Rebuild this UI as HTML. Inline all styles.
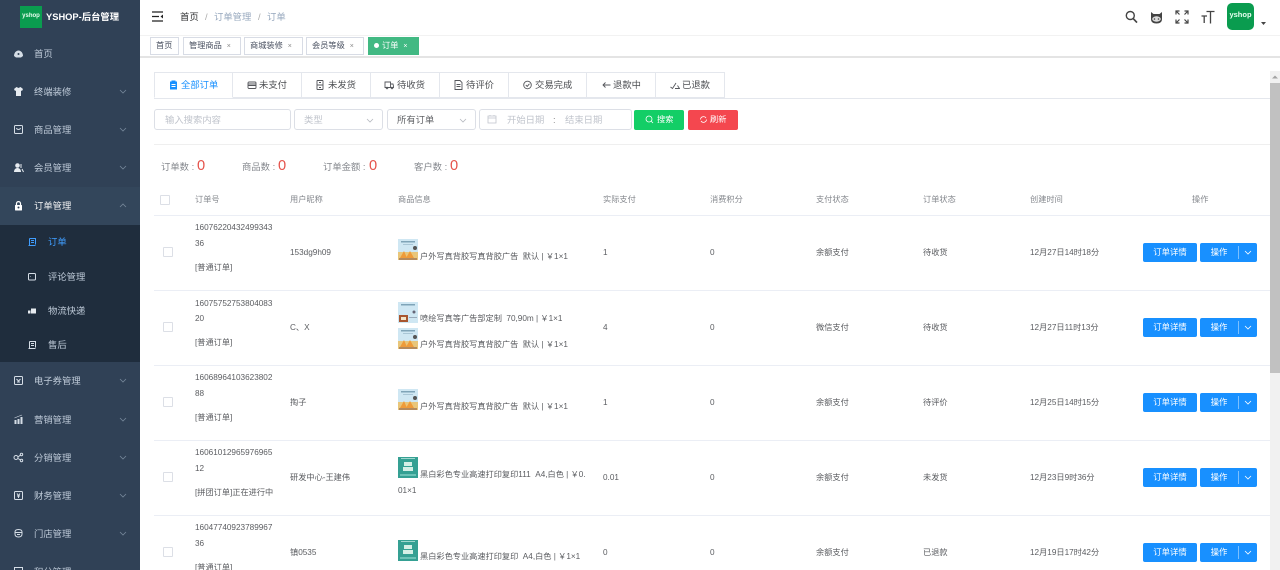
<!DOCTYPE html>
<html lang="zh"><head><meta charset="utf-8"><title>YSHOP</title>
<style>
html,body{margin:0;padding:0;width:1280px;height:570px;overflow:hidden;background:#fff}
body{position:relative;font-family:"Liberation Sans","Noto Sans CJK SC",sans-serif;color:#5b5d61}
#w{position:absolute;left:0;top:0;width:1280px;height:570px;overflow:hidden;filter:blur(.3px)}
.t{position:absolute;white-space:pre;line-height:14px;font-size:8.2px;height:14px}
.k{line-height:12px;height:12px}
.b{position:absolute;box-sizing:border-box}
.side{position:absolute;left:0;top:0;width:140px;height:570px;background:#304156;overflow:hidden}
.m{font-size:9.33px;color:#bfcbd9;left:34px}
.s{font-size:9.33px;color:#bfcbd9;left:48px}
.ic{position:absolute;fill:none;stroke:#d5dde6;stroke-width:1}
.ar{position:absolute;left:119px;width:8px;height:5px;fill:none;stroke:#76879a;stroke-width:.8}
.tab{position:absolute;top:72px;height:26px;box-sizing:border-box;border:1px solid #e4e7ed;border-left:0;background:#fff}
.tt{font-size:9.33px;top:78px;color:#4d4f53}
.ti{position:absolute;top:80px;fill:none;stroke:#55575c;stroke-width:.9}
.tag{position:absolute;top:37px;height:18px;box-sizing:border-box;border:1px solid #d8dce5;font-size:8.2px;line-height:16px;color:#495060;white-space:pre;padding-left:5px;background:#fff}
.tag i{font-style:normal;color:#888;font-size:7px;margin-left:5px}
.in{position:absolute;top:109px;height:21px;box-sizing:border-box;border:1px solid #dcdfe6;border-radius:3px;background:#fff}
.h{color:#85888e;top:193px}
.cb{position:absolute;width:10px;height:10px;box-sizing:border-box;border:1px solid #dcdfe6;border-radius:1px;background:#fff}
.ln{position:absolute;left:154px;width:1116px;height:1px;background:#ebeef5}
.bt{position:absolute;height:19px;background:#1890ff;border-radius:2px;color:#fff;font-size:8.4px;line-height:19px;text-align:center;white-space:pre}
.st{font-size:9.33px;color:#85888e;top:161px;line-height:12px;height:12px}
.n{font-size:14.67px;color:#e5534b;top:160px;line-height:13px;height:13px}
.th{position:absolute;width:20px;height:21px;overflow:hidden}
</style></head><body><div id="w">

<svg width="0" height="0" style="position:absolute"><defs>
<symbol id="pa" viewBox="0 0 20 21"><rect width="20" height="21" fill="#cfe7f3"/><rect x="3" y="2" width="14" height="1.5" fill="#7fa4b8"/><rect x="5" y="5" width="10" height="1" fill="#a9c6d6"/><circle cx="17" cy="9" r="2" fill="#555"/><rect y="13" width="20" height="8" fill="#e9c67a"/><path d="M2 19L6 12L9 19M8 19L12 12L16 19" fill="#ee9b3a"/><rect x="1" y="19" width="18" height="2" fill="#b58a5c"/></symbol>
<symbol id="pb" viewBox="0 0 20 21"><rect width="20" height="21" fill="#cfe7f3"/><rect x="3" y="2" width="14" height="1.5" fill="#7fa4b8"/><circle cx="16" cy="10" r="1.5" fill="#667"/><rect x="1" y="13" width="9" height="7" fill="#a8562f"/><rect x="3" y="15" width="5" height="3" fill="#f2e4c8"/><rect x="11" y="15" width="8" height="1" fill="#9ab"/></symbol>
<symbol id="pc" viewBox="0 0 20 21"><rect width="20" height="21" fill="#35a093"/><rect x="3" y="1" width="14" height="1" fill="#9fd8cf"/><rect x="6" y="5" width="8" height="4" fill="#d5efe6"/><rect x="5" y="10" width="10" height="4" fill="#d5efe6"/><rect x="2" y="17" width="16" height="2" fill="#6cc2b6"/></symbol>
<symbol id="ch" viewBox="0 0 8 5"><path d="M1 1L4 4L7 1"/></symbol>
<symbol id="cu" viewBox="0 0 8 5"><path d="M1 4L4 1L7 4"/></symbol>
</defs></svg>

<!-- SIDEBAR -->
<div class="side">
  <div class="b" style="left:20px;top:6px;width:22px;height:22px;background:#0a9c4f"></div>
  <div class="t k" style="left:20px;top:10px;width:22px;text-align:center;font-size:6px;color:#e8fff0;font-weight:bold">yshop</div>
  <div class="t k" style="left:46px;top:11px;font-size:9.33px;font-weight:bold;color:#fff">YSHOP-后台管理</div>

  <div class="b" style="left:0;top:187px;width:140px;height:38px;background:#33465b"></div>
  <div class="b" style="left:0;top:225px;width:140px;height:137px;background:#1f2d3d"></div>

  <svg class="ic" style="left:13px;top:48px" width="11" height="11" viewBox="0 0 11 11"><path d="M1 8C1 5 3 2.5 5.5 2.5S10 5 10 8L8 9.5H3Z" fill="#d5dde6" stroke="none"/><circle cx="5.5" cy="6" r="1" fill="#304156" stroke="none"/></svg>
  <div class="t m" style="top:47px">首页</div>

  <svg class="ic" style="left:13px;top:86px" width="11" height="11" viewBox="0 0 11 11"><path d="M3.5 1L1 3L2 5L3 4.5V10H8V4.5L9 5L10 3L7.5 1L5.5 2Z" fill="#e6ebf0" stroke="none"/></svg>
  <div class="t m" style="top:85px">终端装修</div>
  <svg class="ar" style="top:89px"><use href="#ch"/></svg>

  <svg class="ic" style="left:13px;top:124px" width="11" height="11" viewBox="0 0 11 11"><rect x="1.5" y="1.5" width="8" height="8" rx="1"/><path d="M3.5 4C4 6 7 6 7.5 4"/></svg>
  <div class="t m" style="top:123px">商品管理</div>
  <svg class="ar" style="top:127px"><use href="#ch"/></svg>

  <svg class="ic" style="left:13px;top:162px" width="11" height="11" viewBox="0 0 11 11"><circle cx="4.5" cy="3.5" r="2.3" fill="#e6ebf0" stroke="none"/><path d="M1 10C1 7 3 6 4.5 6S8 7 8 10Z" fill="#e6ebf0" stroke="none"/><path d="M8 2V6M9 7L10.5 10" stroke="#e6ebf0"/></svg>
  <div class="t m" style="top:161px">会员管理</div>
  <svg class="ar" style="top:165px"><use href="#ch"/></svg>

  <svg class="ic" style="left:13px;top:200px" width="11" height="11" viewBox="0 0 11 11"><path d="M3.5 5V3.5C3.5 1 7.5 1 7.5 3.5V5" stroke="#fff" stroke-width="1.2"/><rect x="2" y="5" width="7" height="5.5" rx=".5" fill="#fff" stroke="none"/><circle cx="5.5" cy="7.5" r="1" fill="#304156" stroke="none"/></svg>
  <div class="t m" style="top:199px;color:#f4f4f5">订单管理</div>
  <svg class="ar" style="top:203px"><use href="#cu"/></svg>

  <svg class="ic" style="left:27px;top:237px;stroke:#409eff" width="10" height="10" viewBox="0 0 10 10"><path d="M2.5 1.5H8.5V7.5M1.5 8.5H8.5M2.5 1.5V8M4 3.5H7M4 5.5H7"/></svg>
  <div class="t s" style="top:235px;color:#409eff">订单</div>
  <svg class="ic" style="left:27px;top:272px" width="10" height="10" viewBox="0 0 10 10"><rect x="1.5" y="1.5" width="7" height="6.5" rx="1"/><path d="M3 4.5H3.5"/></svg>
  <div class="t s" style="top:270px">评论管理</div>
  <svg class="ic" style="left:27px;top:306px" width="10" height="10" viewBox="0 0 10 10"><rect x="4" y="2.5" width="5" height="5" fill="#e6ebf0" stroke="none"/><rect x="1" y="4.5" width="2.5" height="3" fill="#e6ebf0" stroke="none"/></svg>
  <div class="t s" style="top:304px">物流快递</div>
  <svg class="ic" style="left:27px;top:340px" width="10" height="10" viewBox="0 0 10 10"><path d="M2.5 1.5H8.5V7.5M1.5 8.5H8.5M2.5 1.5V8M4 3.5H7M4 5.5H7"/></svg>
  <div class="t s" style="top:338px">售后</div>

  <svg class="ic" style="left:13px;top:375px" width="11" height="11" viewBox="0 0 11 11"><rect x="1.5" y="1.5" width="8" height="8" rx="1"/><path d="M3.5 4L5.5 6L7.5 4M4 7H7"/></svg>
  <div class="t m" style="top:374px">电子券管理</div>
  <svg class="ar" style="top:378px"><use href="#ch"/></svg>

  <svg class="ic" style="left:13px;top:414px" width="11" height="11" viewBox="0 0 11 11"><path d="M1.5 10V6H3.5V10ZM4.5 10V5H6.5V10ZM7.5 10V3H9.5V10Z" fill="#d5dde6" stroke="none"/><path d="M1.5 4L5 2.5L9 1" stroke-width=".6"/></svg>
  <div class="t m" style="top:413px">营销管理</div>
  <svg class="ar" style="top:417px"><use href="#ch"/></svg>

  <svg class="ic" style="left:13px;top:452px" width="11" height="11" viewBox="0 0 11 11"><circle cx="3" cy="5.5" r="2"/><circle cx="8.5" cy="2.5" r="1.2"/><circle cx="8.5" cy="8.5" r="1.2"/><path d="M5 5L7.5 3M5 6.5L7.5 8"/></svg>
  <div class="t m" style="top:451px">分销管理</div>
  <svg class="ar" style="top:455px"><use href="#ch"/></svg>

  <svg class="ic" style="left:13px;top:490px" width="11" height="11" viewBox="0 0 11 11"><rect x="1.5" y="1.5" width="8" height="8" rx="1"/><path d="M4 3.5L5.5 5.5L7 3.5M5.5 5.5V8M4 6H7"/></svg>
  <div class="t m" style="top:489px">财务管理</div>
  <svg class="ar" style="top:493px"><use href="#ch"/></svg>

  <svg class="ic" style="left:13px;top:528px" width="11" height="11" viewBox="0 0 11 11"><path d="M2 4C2 2 3.5 1.5 5.5 1.5S9 2 9 4V6C9 8 7.5 9 5.5 9S2 8 2 6ZM2 4.5H9M4 6.5H7"/></svg>
  <div class="t m" style="top:527px">门店管理</div>
  <svg class="ar" style="top:531px"><use href="#ch"/></svg>

  <svg class="ic" style="left:13px;top:566px" width="11" height="11" viewBox="0 0 11 11"><rect x="1.5" y="1.5" width="8" height="8"/></svg>
  <div class="t m" style="top:565px">积分管理</div>
</div>

<!-- TOP BAR -->
<svg style="position:absolute;left:152px;top:11px" width="12" height="11" viewBox="0 0 12 11"><path d="M0 1H11M0 5.5H7M0 10H11" stroke="#222" stroke-width="1.3" fill="none"/><path d="M11 3.5L8.5 5.5L11 7.5Z" fill="#222"/></svg>
<div class="t k" style="left:180px;top:11px;font-size:9.33px;color:#303133">首页</div>
<div class="t k" style="left:205px;top:11px;font-size:9.33px;color:#aaa">/</div>
<div class="t k" style="left:214px;top:11px;font-size:9.33px;color:#97a8be">订单管理</div>
<div class="t k" style="left:258px;top:11px;font-size:9.33px;color:#aaa">/</div>
<div class="t k" style="left:267px;top:11px;font-size:9.33px;color:#97a8be">订单</div>

<svg style="position:absolute;left:1125px;top:10px" width="13" height="14" viewBox="0 0 13 14"><circle cx="5.3" cy="5.5" r="4" fill="none" stroke="#444" stroke-width="1.4"/><path d="M8.2 8.6L12 12.6" stroke="#444" stroke-width="1.7"/></svg>
<svg style="position:absolute;left:1150px;top:11px" width="13" height="13" viewBox="0 0 13 13"><path d="M1 1L3.5 3H9.5L12 1V8C12 11 10 12.5 6.5 12.5S1 11 1 8Z" fill="#444"/><ellipse cx="6.5" cy="8" rx="4.3" ry="2.7" fill="#ddd"/><circle cx="4.5" cy="8" r=".8" fill="#444"/><circle cx="8.5" cy="8" r=".8" fill="#444"/></svg>
<svg style="position:absolute;left:1175px;top:10px" width="14" height="14" viewBox="0 0 14 14"><g fill="none" stroke="#444" stroke-width="1.2"><path d="M1 4.5V1H4.5M1 1L4.5 4.5M13 4.5V1H9.5M13 1L9.5 4.5M1 9.5V13H4.5M1 13L4.5 9.5M13 9.5V13H9.5M13 13L9.5 9.5"/></g></svg>
<svg style="position:absolute;left:1201px;top:10px" width="14" height="14" viewBox="0 0 14 14"><path d="M5.5 1.5H13.5M9.5 1.5V13.5M0.5 6H6M3.2 6V13" fill="none" stroke="#444" stroke-width="1.3"/></svg>
<div class="b" style="left:1227px;top:3px;width:27px;height:27px;background:#0a9c4f;border-radius:5px"></div>
<div class="t k" style="left:1227px;top:9px;width:27px;text-align:center;font-size:7.5px;color:#e8fff0;font-weight:bold">yshop</div>
<svg style="position:absolute;left:1261px;top:22px" width="6" height="4" viewBox="0 0 6 4"><path d="M0 0H5L2.5 3Z" fill="#444"/></svg>

<!-- TAG BAR -->
<div class="b" style="left:140px;top:35px;width:1140px;height:1px;background:#f2f2f2"></div>
<div class="b" style="left:140px;top:56px;width:1140px;height:2px;background:#e4e4e4"></div>
<div class="tag" style="left:150px;width:29px">首页</div>
<div class="tag" style="left:183px;width:58px">管理商品<i>×</i></div>
<div class="tag" style="left:244px;width:59px">商城装修<i>×</i></div>
<div class="tag" style="left:306px;width:58px">会员等级<i>×</i></div>
<div class="tag" style="left:368px;width:51px;background:#42b983;border-color:#42b983;color:#fff"><span style="display:inline-block;width:5px;height:5px;border-radius:50%;background:#fff;margin-right:3px;vertical-align:0"></span>订单<i style="color:#fff">×</i></div>

<!-- TABS -->
<div class="b" style="left:154px;top:98px;width:1116px;height:1px;background:#e4e7ed"></div>
<div class="tab" style="left:154px;width:79px;border-left:1px solid #e4e7ed;border-bottom-color:#fff"></div>
<div class="tab" style="left:233px;width:69px"></div>
<div class="tab" style="left:302px;width:69px"></div>
<div class="tab" style="left:371px;width:69px"></div>
<div class="tab" style="left:440px;width:69px"></div>
<div class="tab" style="left:509px;width:78px"></div>
<div class="tab" style="left:587px;width:69px"></div>
<div class="tab" style="left:656px;width:69px"></div>

<svg class="ti" style="left:169px;stroke:none" width="9" height="10" viewBox="0 0 9 10"><path d="M2.5 0.5H6.5V1.5H8V9.5H1V1.5H2.5Z" fill="#1890ff"/><rect x="2.5" y="4" width="4" height="1" fill="#fff"/><rect x="2.5" y="6" width="4" height="1" fill="#fff"/></svg>
<div class="t tt" style="left:181px;color:#1890ff">全部订单</div>
<svg class="ti" style="left:247px" width="10" height="10" viewBox="0 0 10 10"><rect x="1" y="2" width="8" height="6.5" rx="1"/><path d="M1 4H9M1 5.5H9"/></svg>
<div class="t tt" style="left:259px">未支付</div>
<svg class="ti" style="left:316px" width="8" height="10" viewBox="0 0 8 10"><rect x="1" y=".5" width="6" height="9" rx=".5"/><path d="M1 5H7M3 2.5H5M3 7.5H5"/></svg>
<div class="t tt" style="left:328px">未发货</div>
<svg class="ti" style="left:384px" width="10" height="10" viewBox="0 0 10 10"><path d="M1 2H6.5V7.5H1ZM6.5 4H9L9.5 6V7.5H6.5"/><circle cx="3" cy="8" r=".8"/><circle cx="8" cy="8" r=".8"/></svg>
<div class="t tt" style="left:397px">待收货</div>
<svg class="ti" style="left:454px" width="9" height="10" viewBox="0 0 9 10"><path d="M1 .5H6L8 2.5V9.5H1ZM2.5 4.5H6.5M2.5 6.5H6.5"/></svg>
<div class="t tt" style="left:466px">待评价</div>
<svg class="ti" style="left:523px" width="9" height="10" viewBox="0 0 9 10"><circle cx="4.5" cy="5" r="3.8"/><path d="M2.8 5L4.2 6.4L6.4 3.8"/></svg>
<div class="t tt" style="left:535px">交易完成</div>
<svg class="ti" style="left:602px" width="9" height="10" viewBox="0 0 9 10"><path d="M8.5 5H1M3.5 2.5L1 5L3.5 7.5"/></svg>
<div class="t tt" style="left:613px">退款中</div>
<svg class="ti" style="left:670px" width="10" height="10" viewBox="0 0 10 10"><path d="M.5 7L2.5 8.5L6 3M5 8.5H9.5L7.5 5.5"/></svg>
<div class="t tt" style="left:682px">已退款</div>

<!-- FILTERS -->
<div class="in" style="left:154px;width:137px"></div>
<div class="t k" style="left:165px;top:114px;font-size:9.33px;color:#c0c4cc">输入搜索内容</div>
<div class="in" style="left:294px;width:89px"></div>
<div class="t k" style="left:304px;top:114px;font-size:9.33px;color:#c0c4cc">类型</div>
<svg class="ar" style="left:366px;top:118px;stroke:#b5b8bf"><use href="#ch"/></svg>
<div class="in" style="left:387px;width:89px"></div>
<div class="t k" style="left:397px;top:114px;font-size:9.33px;color:#606266">所有订单</div>
<svg class="ar" style="left:459px;top:118px;stroke:#b5b8bf"><use href="#ch"/></svg>
<div class="in" style="left:479px;width:153px"></div>
<svg style="position:absolute;left:487px;top:114px" width="10" height="10" viewBox="0 0 10 10"><path d="M1 2H9V9H1ZM1 4H9M3 1V2M7 1V2" fill="none" stroke="#c0c4cc" stroke-width=".8"/></svg>
<div class="t k" style="left:507px;top:114px;font-size:9.33px;color:#c0c4cc">开始日期</div>
<div class="t k" style="left:553px;top:114px;font-size:9.33px;color:#888">:</div>
<div class="t k" style="left:565px;top:114px;font-size:9.33px;color:#c0c4cc">结束日期</div>
<div class="b" style="left:634px;top:110px;width:50px;height:20px;background:#13ce66;border-radius:2px"></div>
<svg style="position:absolute;left:645px;top:115px" width="9" height="9" viewBox="0 0 9 9"><circle cx="4" cy="4" r="3" fill="none" stroke="#fff" stroke-width=".8"/><path d="M6 6L8 8" stroke="#fff" stroke-width=".8"/></svg>
<div class="t" style="left:657px;top:113px;color:#fff">搜索</div>
<div class="b" style="left:688px;top:110px;width:50px;height:20px;background:#f4474f;border-radius:2px"></div>
<svg style="position:absolute;left:699px;top:115px" width="9" height="9" viewBox="0 0 9 9"><path d="M1.5 4.5A3 3 0 0 1 7 3M7.5 4.5A3 3 0 0 1 2 6" fill="none" stroke="#fff" stroke-width=".8"/></svg>
<div class="t" style="left:710px;top:113px;color:#fff">刷新</div>
<div class="b" style="left:154px;top:144px;width:1116px;height:1px;background:#efefef"></div>

<!-- STATS -->
<div class="t st" style="left:161px">订单数 :</div><div class="t n" style="left:197px">0</div>
<div class="t st" style="left:242px">商品数 :</div><div class="t n" style="left:278px">0</div>
<div class="t st" style="left:323px">订单金额 :</div><div class="t n" style="left:369px">0</div>
<div class="t st" style="left:414px">客户数 :</div><div class="t n" style="left:450px">0</div>

<!-- TABLE HEAD -->
<div class="cb" style="left:160px;top:195px"></div>
<div class="t h" style="left:195px">订单号</div>
<div class="t h" style="left:290px">用户昵称</div>
<div class="t h" style="left:398px">商品信息</div>
<div class="t h" style="left:603px">实际支付</div>
<div class="t h" style="left:710px">消费积分</div>
<div class="t h" style="left:816px">支付状态</div>
<div class="t h" style="left:923px">订单状态</div>
<div class="t h" style="left:1030px">创建时间</div>
<div class="t h" style="left:1192px">操作</div>
<div class="ln" style="top:215px"></div>
<div class="ln" style="top:290px"></div>
<div class="ln" style="top:365px"></div>
<div class="ln" style="top:440px"></div>
<div class="ln" style="top:515px"></div>

<!-- ROW 1 -->
<div class="cb" style="left:163px;top:247px"></div>
<div class="t" style="left:195px;top:221px">16076220432499343</div>
<div class="t" style="left:195px;top:237px">36</div>
<div class="t" style="left:195px;top:261px">[普通订单]</div>
<div class="t" style="left:290px;top:246px">153dg9h09</div>
<svg class="th" style="left:398px;top:239px"><use href="#pa"/></svg>
<div class="t" style="left:420px;top:250px">户外写真背胶写真背胶广告  默认 | ￥1×1</div>
<div class="t" style="left:603px;top:246px">1</div>
<div class="t" style="left:710px;top:246px">0</div>
<div class="t" style="left:816px;top:246px">余额支付</div>
<div class="t" style="left:923px;top:246px">待收货</div>
<div class="t" style="left:1030px;top:246px">12月27日14时18分</div>
<div class="bt" style="left:1143px;top:243px;width:54px">订单详情</div>
<div class="bt" style="left:1200px;top:243px;width:57px;padding-right:19px;box-sizing:border-box">操作</div>
<div class="b" style="left:1238px;top:246px;width:1px;height:13px;background:#7cc0ff"></div>
<svg class="ar" style="left:1244px;top:250px;stroke:#fff"><use href="#ch"/></svg>

<!-- ROW 2 -->
<div class="cb" style="left:163px;top:322px"></div>
<div class="t" style="left:195px;top:297px">16075752753804083</div>
<div class="t" style="left:195px;top:312px">20</div>
<div class="t" style="left:195px;top:336px">[普通订单]</div>
<div class="t" style="left:290px;top:321px">C、X</div>
<svg class="th" style="left:398px;top:302px"><use href="#pb"/></svg>
<div class="t" style="left:420px;top:312px">喷绘写真等广告部定制  70,90m | ￥1×1</div>
<svg class="th" style="left:398px;top:328px"><use href="#pa"/></svg>
<div class="t" style="left:420px;top:338px">户外写真背胶写真背胶广告  默认 | ￥1×1</div>
<div class="t" style="left:603px;top:321px">4</div>
<div class="t" style="left:710px;top:321px">0</div>
<div class="t" style="left:816px;top:321px">微信支付</div>
<div class="t" style="left:923px;top:321px">待收货</div>
<div class="t" style="left:1030px;top:321px">12月27日11时13分</div>
<div class="bt" style="left:1143px;top:318px;width:54px">订单详情</div>
<div class="bt" style="left:1200px;top:318px;width:57px;padding-right:19px;box-sizing:border-box">操作</div>
<div class="b" style="left:1238px;top:321px;width:1px;height:13px;background:#7cc0ff"></div>
<svg class="ar" style="left:1244px;top:325px;stroke:#fff"><use href="#ch"/></svg>

<!-- ROW 3 -->
<div class="cb" style="left:163px;top:397px"></div>
<div class="t" style="left:195px;top:371px">16068964103623802</div>
<div class="t" style="left:195px;top:387px">88</div>
<div class="t" style="left:195px;top:411px">[普通订单]</div>
<div class="t" style="left:290px;top:396px">掏子</div>
<svg class="th" style="left:398px;top:389px"><use href="#pa"/></svg>
<div class="t" style="left:420px;top:400px">户外写真背胶写真背胶广告  默认 | ￥1×1</div>
<div class="t" style="left:603px;top:396px">1</div>
<div class="t" style="left:710px;top:396px">0</div>
<div class="t" style="left:816px;top:396px">余额支付</div>
<div class="t" style="left:923px;top:396px">待评价</div>
<div class="t" style="left:1030px;top:396px">12月25日14时15分</div>
<div class="bt" style="left:1143px;top:393px;width:54px">订单详情</div>
<div class="bt" style="left:1200px;top:393px;width:57px;padding-right:19px;box-sizing:border-box">操作</div>
<div class="b" style="left:1238px;top:396px;width:1px;height:13px;background:#7cc0ff"></div>
<svg class="ar" style="left:1244px;top:400px;stroke:#fff"><use href="#ch"/></svg>

<!-- ROW 4 -->
<div class="cb" style="left:163px;top:472px"></div>
<div class="t" style="left:195px;top:446px">16061012965976965</div>
<div class="t" style="left:195px;top:462px">12</div>
<div class="t" style="left:195px;top:486px">[拼团订单]正在进行中</div>
<div class="t" style="left:290px;top:471px">研发中心-王建伟</div>
<svg class="th" style="left:398px;top:457px"><use href="#pc"/></svg>
<div class="t" style="left:420px;top:468px">黑白彩色专业高速打印复印111  A4,白色 | ￥0.</div>
<div class="t" style="left:398px;top:484px">01×1</div>
<div class="t" style="left:603px;top:471px">0.01</div>
<div class="t" style="left:710px;top:471px">0</div>
<div class="t" style="left:816px;top:471px">余额支付</div>
<div class="t" style="left:923px;top:471px">未发货</div>
<div class="t" style="left:1030px;top:471px">12月23日9时36分</div>
<div class="bt" style="left:1143px;top:468px;width:54px">订单详情</div>
<div class="bt" style="left:1200px;top:468px;width:57px;padding-right:19px;box-sizing:border-box">操作</div>
<div class="b" style="left:1238px;top:471px;width:1px;height:13px;background:#7cc0ff"></div>
<svg class="ar" style="left:1244px;top:475px;stroke:#fff"><use href="#ch"/></svg>

<!-- ROW 5 -->
<div class="cb" style="left:163px;top:547px"></div>
<div class="t" style="left:195px;top:521px">16047740923789967</div>
<div class="t" style="left:195px;top:537px">36</div>
<div class="t" style="left:195px;top:561px">[普通订单]</div>
<div class="t" style="left:290px;top:546px">镇0535</div>
<svg class="th" style="left:398px;top:540px"><use href="#pc"/></svg>
<div class="t" style="left:420px;top:550px">黑白彩色专业高速打印复印  A4,白色 | ￥1×1</div>
<div class="t" style="left:603px;top:546px">0</div>
<div class="t" style="left:710px;top:546px">0</div>
<div class="t" style="left:816px;top:546px">余额支付</div>
<div class="t" style="left:923px;top:546px">已退款</div>
<div class="t" style="left:1030px;top:546px">12月19日17时42分</div>
<div class="bt" style="left:1143px;top:543px;width:54px">订单详情</div>
<div class="bt" style="left:1200px;top:543px;width:57px;padding-right:19px;box-sizing:border-box">操作</div>
<div class="b" style="left:1238px;top:546px;width:1px;height:13px;background:#7cc0ff"></div>
<svg class="ar" style="left:1244px;top:550px;stroke:#fff"><use href="#ch"/></svg>

<!-- SCROLLBAR -->
<div class="b" style="left:1270px;top:71px;width:10px;height:499px;background:#f1f1f1"></div>
<svg style="position:absolute;left:1272px;top:75px" width="6" height="4" viewBox="0 0 6 4"><path d="M0 3.5L3 0.5L6 3.5Z" fill="#a3a3a3"/></svg>
<div class="b" style="left:1270px;top:83px;width:10px;height:290px;background:#c1c1c1"></div>
</div></body></html>
